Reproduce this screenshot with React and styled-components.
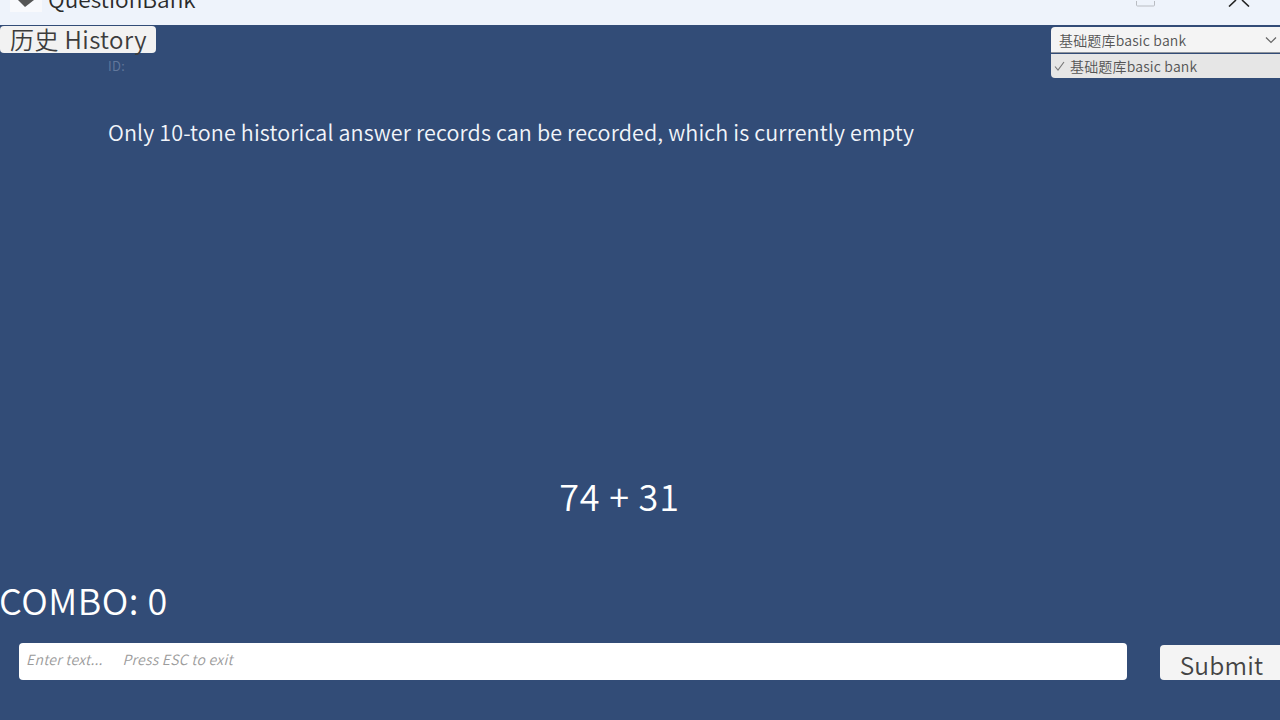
import * as React from "react"
import styled, { createGlobalStyle } from "styled-components"

const GlobalStyle = createGlobalStyle`
  html, body {
    margin: 0;
    padding: 0;
    background: #324c77;
    overflow: hidden;
  }
  * {
    box-sizing: border-box;
  }
`

const StyledWindow = styled.div`
  width: 1280px;
  height: 720px;
  display: flex;
  flex-direction: column;
  overflow: hidden;
  font-family: "Noto Sans CJK SC", "Noto Sans", sans-serif;
  font-weight: 350;
`

const TitleBar = styled.div`
  height: 25px;
  flex: none;
  background: #eef3fb;
  display: flex;
  align-items: flex-end;
  padding: 0 30px 0 10px;
  overflow: hidden;
`

const AppIcon = styled.svg`
  width: 32px;
  height: 12px;
  flex: none;
  margin-bottom: 13px;
`

const AppName = styled.div`
  margin-left: 6px;
  font-size: 22.6px;
  line-height: 24px;
  height: 24px;
  color: #2b2b2b;
  position: relative;
  top: -14px;
  flex: 1;
`

const WinButton = styled.svg`
  flex: none;
  margin-bottom: 18px;
`

const Content = styled.div`
  flex: 1;
  background: #324c77;
  display: flex;
  flex-direction: column;
`

const TopRow = styled.div`
  display: flex;
  justify-content: space-between;
  align-items: flex-start;
  padding-top: 1px;
`

const HistoryButton = styled.button`
  width: 156px;
  height: 27px;
  padding: 0 0 2px 10px;
  border: 0;
  border-radius: 4px;
  background: #f2f2f2;
  color: #3c3c3c;
  font-family: inherit;
  font-weight: inherit;
  font-size: 24px;
  line-height: 25px;
  letter-spacing: 0.4px;
  text-align: left;
  white-space: nowrap;
`

const SelectWrap = styled.div`
  position: relative;
  width: 229px;
  margin-top: 1px;
`

const SelectBox = styled.div`
  height: 26px;
  padding: 1px 3px 0 8px;
  display: flex;
  align-items: center;
  justify-content: space-between;
  background: #f4f4f4;
  border-radius: 4px 0 0 0;
  border-bottom: 1px solid #8f949c;
  color: #555555;
  font-size: 14px;
  letter-spacing: 0.17px;
`

const Dropdown = styled.div`
  position: absolute;
  top: 27px;
  left: 0;
  width: 100%;
  height: 24px;
  padding-left: 3px;
  display: flex;
  align-items: center;
  gap: 5px;
  background: #e6e6e6;
  border-radius: 0 0 0 4px;
  color: #555555;
  font-size: 14px;
  letter-spacing: 0.17px;
`

const Chevron = styled.svg`
  width: 12px;
  height: 8px;
  flex: none;
`

const Tick = styled.svg`
  width: 11px;
  height: 10px;
  flex: none;
`

const IdLabel = styled.div`
  margin: 4px 0 0 108px;
  font-size: 13px;
  line-height: 18px;
  letter-spacing: 0.3px;
  color: #62789c;
`

const Message = styled.div`
  margin: 42px 0 0 108px;
  font-size: 21.5px;
  line-height: 30px;
  letter-spacing: 0.13px;
  color: #f2f5fa;
`

const Question = styled.div`
  margin-top: 323px;
  width: 1239px;
  text-align: center;
  font-size: 36px;
  line-height: 50px;
  letter-spacing: 0.8px;
  color: #ffffff;
`

const Combo = styled.div`
  margin: 54px 0 0 -1px;
  font-size: 36px;
  line-height: 50px;
  letter-spacing: 0.5px;
  color: #ffffff;
`

const InputRow = styled.div`
  margin-top: 19px;
  display: flex;
  align-items: flex-start;
  padding-left: 19px;
`

const TextField = styled.div`
  width: 1108px;
  height: 37px;
  padding: 0 0 6px 7px;
  display: flex;
  align-items: center;
  gap: 20px;
  background: #ffffff;
  border-radius: 4px;
  color: #9b9b9b;
  font-size: 14px;
  font-style: italic;
  letter-spacing: 0.25px;
`

const SubmitButton = styled.button`
  margin-left: 33px;
  width: 120px;
  height: 35px;
  margin-top: 2px;
  padding: 2px 0 0 3px;
  border: 0;
  border-radius: 4px 0 0 4px;
  background: #f4f4f4;
  color: #444444;
  font-family: inherit;
  font-weight: inherit;
  font-size: 24.5px;
  line-height: 35px;
  letter-spacing: 0.2px;
  text-align: center;
`

const App = () => {
  return (
    <StyledWindow>
      <GlobalStyle />
      <TitleBar>
        <AppIcon viewBox="0 0 32 12">
          <rect width="32" height="12" fill="#f8f9fc" />
          <path d="M15 7 L8 0 L24 0 Z" fill="#555555" />
        </AppIcon>
        <AppName>QuestionBank</AppName>
        <WinButton width="20" height="6" viewBox="0 0 20 6">
          <rect x="0.5" y="-6" width="18" height="11" rx="1" fill="none" stroke="#b9bcc2" />
        </WinButton>
        <WinButton width="22" height="7" viewBox="0 0 22 7" style={{ marginLeft: 72 }}>
          <path d="M1 6.5 L8 0 M21 6.5 L14 0" fill="none" stroke="#222222" strokeWidth="1.6" />
        </WinButton>
      </TitleBar>
      <Content>
        <TopRow>
          <HistoryButton>历史 History</HistoryButton>
          <SelectWrap>
            <SelectBox>
              基础题库basic bank
              <Chevron viewBox="0 0 12 8">
                <path d="M1 1.5 L6 6.5 L11 1.5" fill="none" stroke="#666666" strokeWidth="1.2" />
              </Chevron>
            </SelectBox>
            <Dropdown>
              <Tick viewBox="0 0 11 10">
                <path d="M1 5.5 L4 9 L10 1" fill="none" stroke="#777777" strokeWidth="1.1" />
              </Tick>
              基础题库basic bank
            </Dropdown>
          </SelectWrap>
        </TopRow>
        <IdLabel>ID:</IdLabel>
        <Message>Only 10-tone historical answer records can be recorded, which is currently empty</Message>
        <Question>74 + 31</Question>
        <Combo>COMBO: 0</Combo>
        <InputRow>
          <TextField>
            <span>Enter text...</span>
            <span>Press ESC to exit</span>
          </TextField>
          <SubmitButton>Submit</SubmitButton>
        </InputRow>
      </Content>
    </StyledWindow>
  )
}

export default App
